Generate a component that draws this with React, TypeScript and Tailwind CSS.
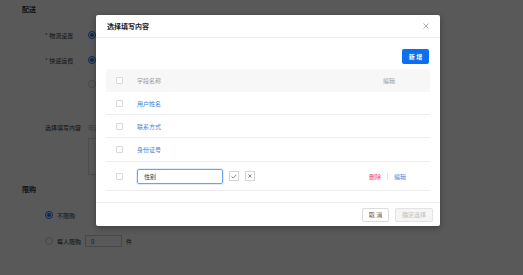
import React from "react";

const Radio = ({ checked }: { checked?: boolean }) => (
  <span
    className={`flex h-[8px] w-[8px] items-center justify-center rounded-full border ${
      checked ? "border-[#1a6fe8]" : "border-[#cfcfcf]"
    } bg-white`}
  >
    {checked && <span className="h-[4px] w-[4px] rounded-full bg-[#1a6fe8]" />}
  </span>
);

const Box = () => (
  <span className="block h-[7px] w-[7px] rounded-[1px] border border-[#d9d9d9] bg-white" />
);

const rows = ["用户姓名", "联系方式", "身份证号"];

export default function App() {
  return (
    <div className="relative h-[275px] w-[523px] overflow-hidden bg-white font-['Noto_Sans_CJK_SC','Noto_Sans',sans-serif] text-[6px] text-[#333]">
      {/* underlying page */}
      <div className="pl-[22px] pt-[5px]">
        <div className="text-[7px] font-bold leading-[9px]">配送</div>
        <div className="mt-[15px] flex h-[12px] items-center pl-[23px]">
          <span className="w-[43px]">
            <span className="text-[#e53935]">*</span> 物流设置
          </span>
          <Radio checked />
        </div>
        <div className="mt-[13px] flex h-[12px] items-center pl-[23px]">
          <span className="w-[43px]">
            <span className="text-[#e53935]">*</span> 快递运费
          </span>
          <Radio checked />
        </div>
        <div className="mt-[12px] flex h-[12px] items-center pl-[66px]">
          <Radio />
        </div>
        <div className="mt-[31px] flex h-[12px] items-center pl-[23px]">
          <span className="w-[43px]">选择填写内容</span>
          <span className="text-[#999]">可选择多项</span>
        </div>
        <div className="ml-[66px] mt-[5px] h-[37px] w-[200px] border border-[#ddd]" />
        <div className="mt-[10px] text-[7px] font-bold leading-[9px]">限购</div>
        <div className="mt-[15px] flex h-[12px] items-center gap-[4px] pl-[23px]">
          <Radio checked />
          <span>不限购</span>
        </div>
        <div className="mt-[14px] flex h-[12px] items-center gap-[4px] pl-[23px]">
          <Radio />
          <span>每人限购</span>
          <span className="flex h-[12px] w-[37px] items-center border border-[#ccc] pl-[5px]">0</span>
          <span>件</span>
        </div>
      </div>

      {/* overlay */}
      <div className="absolute inset-0 bg-black/65" />

      {/* modal */}
      <div className="absolute left-[96px] top-[15px] flex h-[211px] w-[344px] flex-col rounded-[2px] bg-white shadow-[0_2px_6px_rgba(0,0,0,0.3)]">
        <div className="flex h-[23px] items-center justify-between border-b border-[#ececec] pl-[11px] pr-[10px]">
          <span className="text-[7px] font-bold text-[#222]">选择填写内容</span>
          <svg width="6" height="6" viewBox="0 0 6 6" className="mr-[1px]">
            <path d="M0.5 0.5L5.5 5.5M5.5 0.5L0.5 5.5" stroke="#999" strokeWidth="0.8" />
          </svg>
        </div>

        <div className="px-[10px] pt-[11px]">
          <div className="flex justify-end pr-[1px]">
            <button className="flex h-[15px] w-[27px] items-center justify-center rounded-[2px] bg-[#0b6ff2] text-[6px] font-bold text-white">
              新 增
            </button>
          </div>
          <div className="mt-[5px]">
            <div className="flex h-[23px] items-center bg-[#f7f7f7] text-[#999]">
              <div className="w-[31px] pl-[10px]">
                <Box />
              </div>
              <div className="flex-1">字段名称</div>
              <div className="w-[61px] pl-[14px]">编辑</div>
            </div>
            {rows.map((r, i) => (
              <div
                key={r}
                className={`flex ${i === 2 ? "h-[24px]" : "h-[23px]"} items-center border-b border-[#eeeeee]`}
              >
                <div className="w-[31px] pl-[10px]">
                  <Box />
                </div>
                <div className="flex-1 text-[#3f7fdc]">{r}</div>
                <div className="w-[61px]" />
              </div>
            ))}
            <div className="flex h-[29px] items-center border-b border-[#eeeeee]">
              <div className="w-[31px] pl-[10px]">
                <Box />
              </div>
              <div className="flex flex-1 items-center">
                <div className="flex h-[15px] w-[86px] items-center rounded-[2px] border border-[#6aa3f0] pl-[6px] text-[#333] shadow-[0_0_0_1px_rgba(106,163,240,0.2)]">
                  性别
                </div>
                <span className="ml-[6px] flex h-[10px] w-[10px] items-center justify-center border border-[#d5d5d5]">
                  <svg width="6" height="5" viewBox="0 0 6 5">
                    <path d="M0.6 2.6L2.2 4L5.4 0.8" stroke="#666" strokeWidth="0.8" fill="none" />
                  </svg>
                </span>
                <span className="ml-[6px] flex h-[10px] w-[10px] items-center justify-center border border-[#d5d5d5]">
                  <svg width="4" height="4" viewBox="0 0 4 4">
                    <path d="M0.5 0.5L3.5 3.5M3.5 0.5L0.5 3.5" stroke="#666" strokeWidth="0.7" />
                  </svg>
                </span>
              </div>
              <div className="flex w-[61px] items-center">
                <span className="text-[#f0436a]">删除</span>
                <span className="ml-[6px] h-[7px] w-px bg-[#e5e5e5]" />
                <span className="ml-[6px] text-[#3f7fdc]">编辑</span>
              </div>
            </div>
          </div>
        </div>

        <div className="mt-auto flex h-[24px] items-center justify-end gap-[6px] border-t border-[#ececec] pr-[7px]">
          <button className="flex h-[14px] w-[27px] items-center justify-center rounded-[2px] border border-[#dcdcdc] bg-white text-[6px] text-[#555]">
            取 消
          </button>
          <button className="flex h-[14px] w-[38px] items-center justify-center rounded-[2px] border border-[#e3e3e3] bg-[#f5f5f5] text-[6px] text-[#c0c0c0]">
            确定选择
          </button>
        </div>
      </div>
    </div>
  );
}
